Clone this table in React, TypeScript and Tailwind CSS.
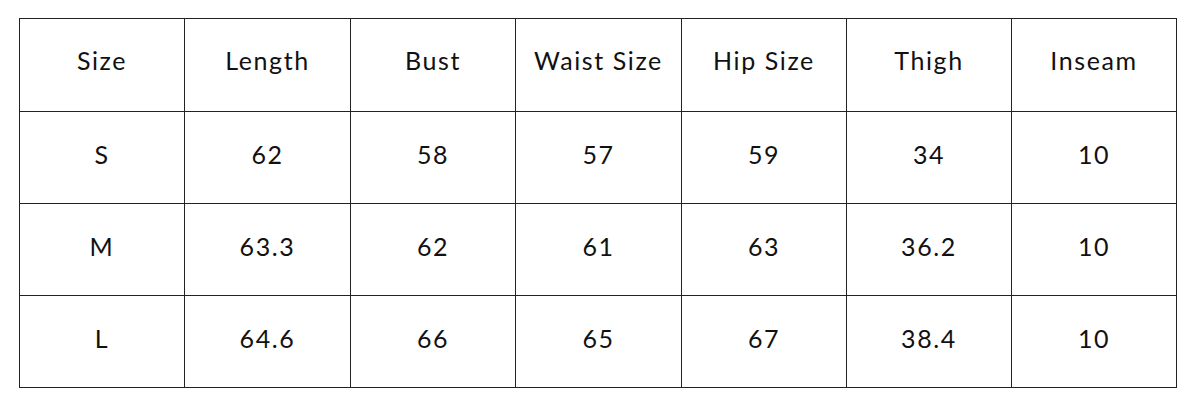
import React from "react";

const headers = ["Size", "Length", "Bust", "Waist Size", "Hip Size", "Thigh", "Inseam"];
const rows = [
  ["S", "62", "58", "57", "59", "34", "10"],
  ["M", "63.3", "62", "61", "63", "36.2", "10"],
  ["L", "64.6", "66", "65", "67", "38.4", "10"],
];

export default function App() {
  return (
    <div className="w-[1200px] h-[400px] bg-white pt-[18px] pl-[19px]" style={{ fontFamily: "Lato, 'Open Sans', sans-serif" }}>
      <div className="grid grid-cols-[165px_166px_165px_166px_165px_165px_165px] w-[1158px] border-l border-t border-[#222] text-[#111] text-[25px] tracking-[1.6px]">
        {headers.map((h) => (
          <div key={h} className="h-[93px] border-r border-b border-[#222] flex items-center justify-center pb-[8px]">
            {h}
          </div>
        ))}
        {rows.map((r, i) =>
          r.map((c, j) => (
            <div key={i + "-" + j} className="h-[92px] border-r border-b border-[#222] flex items-center justify-center pb-[6px]">
              {c}
            </div>
          ))
        )}
      </div>
    </div>
  );
}
